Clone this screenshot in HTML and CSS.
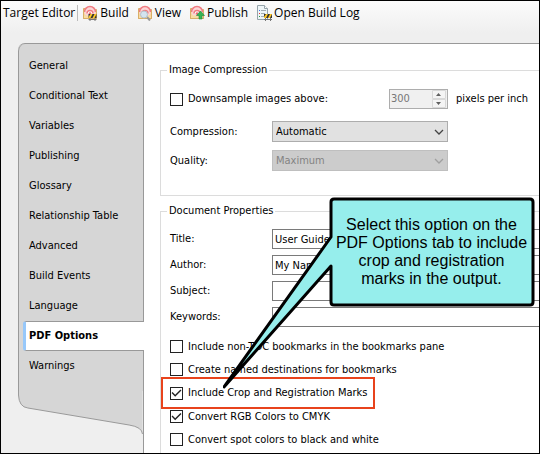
FILE: index.html
```html
<!DOCTYPE html>
<html lang="en">
<head>
<meta charset="utf-8">
<title>Target Editor</title>
<link rel="stylesheet" href="styles.css">
</head>
<body>
<svg class="defs" aria-hidden="true">
  <symbol id="target" viewBox="0 0 16 16">
    <path d="M1.500 3.500h4l1 1h8v9h-13z" fill="#f6d79a" stroke="#d9ae68"/>
    <path d="M2.500 9V6.500a5.500 5.500 0 0 1 11 0V9l-2 2h-7z" fill="#fbd5d6"/>
    <path d="M2.500 7a5.500 5.500 0 0 1 11 0" fill="none" stroke="#f07c82" stroke-width="1.600"/>
    <path d="M5 8.500a3 3 0 0 1 6 0" fill="#fff" stroke="#f07c82" stroke-width="1.400"/>
    <path d="M2 10.500h12v3H2z" fill="#f8dda4"/>
    <path d="M1.500 5v8.500h13V5" fill="none" stroke="#d9ae68"/>
    <circle cx="8" cy="8.500" r="1.200" fill="#ee6a72"/>
  </symbol>
  <symbol id="barrier" viewBox="0 0 8 8">
    <path d="M1.500 4v4M6.500 4v4M0 6.500h8" stroke="#777" fill="none"/>
    <path d="M0 1h8v4H0z" fill="#333"/>
    <path d="M0 4l2-3h2L2 5H0zM4 5l2-4h2L6 5z" fill="#ffc928"/>
  </symbol>
  <symbol id="chevron" viewBox="0 0 10 6"><path d="M1 1l4 4 4-4" fill="none" stroke="currentColor" stroke-width="1.300"/></symbol>
</svg>
<div class="window">
  <header class="toolbar">
    <span class="title">Target Editor</span>
    <button type="button"><svg viewBox="0 0 16 16"><use href="#target" width="16" height="16"/><use href="#barrier" x="6" y="8" width="9" height="8"/></svg>Build</button>
    <button type="button"><svg viewBox="0 0 16 16"><use href="#target" width="16" height="16"/><path d="M10 12l3 3.500" stroke="#999" stroke-width="2"/><circle cx="7" cy="9.500" r="3.500" fill="#d4e4f0" stroke="#b4c0ca"/></svg>View</button>
    <button type="button"><svg viewBox="0 0 16 16"><use href="#target" width="16" height="16"/><path d="M11.500 6l4 4.500h-2.500v3.500h-3v-3.500H7.500z" fill="#35b455" stroke="#1b8a3a" stroke-width=".6"/></svg>Publish</button>
    <button type="button"><svg viewBox="0 0 16 16"><path d="M1.500.500h7l3 3v11h-10z" fill="#eef5f7" stroke="#94a3aa"/><path d="M8.500.500v3h3" fill="#fff" stroke="#94a3aa"/><path d="M5 5.500h5M5 8.500h4M5 11.500h3" stroke="#a2adb2"/><path d="M3 5h1v1H3z" fill="#3a6ff0"/><path d="M3 8h1v1H3z" fill="#e33"/><path d="M3 11h1v1H3z" fill="#2a9c42"/><use href="#barrier" x="8" y="8" width="8" height="8"/></svg>Open Build Log</button>
  </header>
  <div class="editor">
    <nav class="tabs">
      <ul>
        <li><a href="#">General</a></li>
        <li><a href="#">Conditional Text</a></li>
        <li><a href="#">Variables</a></li>
        <li><a href="#">Publishing</a></li>
        <li><a href="#">Glossary</a></li>
        <li><a href="#">Relationship Table</a></li>
        <li><a href="#">Advanced</a></li>
        <li><a href="#">Build Events</a></li>
        <li><a href="#">Language</a></li>
        <li><a href="#" class="current" aria-current="page">PDF Options</a></li>
        <li><a href="#">Warnings</a></li>
      </ul>
      <svg class="tail" viewBox="0 0 126 48" preserveAspectRatio="none"><path d="M.500 0V4Q1 16 10 17L112 34Q125 36 125.500 43V0" fill="#d6d6d6"/><path d="M.500 0V4Q1 16 10 17L112 34Q125 36 125.500 43" fill="none" stroke="#999"/></svg>
    </nav>
    <main class="page">
      <fieldset class="compression">
        <legend>Image Compression</legend>
        <div class="sample">
          <label class="check"><input type="checkbox">Downsample images above:</label>
          <span class="spinner"><input type="text" value="300" aria-label="Pixels per inch" disabled><svg viewBox="0 0 14 18"><path d="M.500.500h13v8H.500zM.500 9.500h13v8H.500z" fill="#f4f4f4" stroke="#d8d8d8"/><path d="M4 6h5L6.500 3zM4 12h5L6.500 15z" fill="#606060"/></svg></span>
          <span>pixels per inch</span>
        </div>
        <div class="row">
          <label for="comp">Compression:</label>
          <span class="select"><select id="comp"><option>Automatic</option></select><svg><use href="#chevron"/></svg></span>
        </div>
        <div class="row">
          <label for="qual">Quality:</label>
          <span class="select off"><select id="qual" disabled><option>Maximum</option></select><svg><use href="#chevron"/></svg></span>
        </div>
      </fieldset>
      <fieldset class="document">
        <legend>Document Properties</legend>
        <div class="fields">
          <div class="row"><label for="t">Title:</label><input id="t" type="text" value="User Guide"></div>
          <div class="row"><label for="a">Author:</label><input id="a" type="text" value="My Name"></div>
          <div class="row"><label for="s">Subject:</label><input id="s" type="text"></div>
          <div class="row"><label for="k">Keywords:</label><input id="k" type="text"></div>
        </div>
        <div class="options">
          <label class="check"><input type="checkbox">Include non-TOC bookmarks in the bookmarks pane</label>
          <label class="check"><input type="checkbox">Create named destinations for bookmarks</label>
          <label class="check marked"><input type="checkbox" checked>Include Crop and Registration Marks</label>
          <label class="check"><input type="checkbox" checked>Convert RGB Colors to CMYK</label>
          <label class="check"><input type="checkbox">Convert spot colors to black and white</label>
        </div>
      </fieldset>
    </main>
  </div>
  <aside class="callout">
    <svg viewBox="0 0 320 200"><path d="M111 4H307Q310 4 310 7V107Q310 110 307 110H111Q108 110 108 107V71L1 192 108 42V7Q108 4 111 4Z" fill="#96eeec" stroke="#000" stroke-width="3" stroke-linejoin="round"/></svg>
    <p>Select this option on the<br>PDF Options tab to include<br>crop and registration<br>marks in the output.</p>
  </aside>
</div>
</body>
</html>
```
FILE: styles.css
```css
* { box-sizing: border-box; }
body {
  margin: 0;
  font: 11px/16px "DejaVu Sans Condensed", "DejaVu Sans", sans-serif;
  color: #000;
}
input, select, button { font: inherit; color: inherit; }
.defs { position: absolute; width: 0; height: 0; }
.window {
  position: relative;
  display: flex;
  flex-direction: column;
  height: 100vh;
  border: 1px solid #000;
  background: linear-gradient(#fbfbfb, #efefef 32px);
  overflow: hidden;
}
.toolbar {
  display: flex;
  align-items: center;
  flex: none;
  height: 24px;
  padding-left: 2px;
  font: 12px/16px "Open Sans", sans-serif;
  white-space: nowrap;
}
.title { padding-right: 2px; border-right: 1px solid #bbb; }
.toolbar button {
  display: flex;
  align-items: center;
  gap: 2px;
  margin-left: 4px;
  padding: 0 4px 0 0;
  border: 0;
  background: none;
}
.toolbar svg { width: 16px; height: 16px; }
.editor {
  display: flex;
  flex: 1;
  min-height: 0;
  margin: 18px 0 0 17px;
  border-top: 1px solid #999;
  border-top-left-radius: 7px;
}
.tabs {
  flex: none;
  width: 126px;
  border-right: 1px solid #999;
}
.tabs ul {
  margin: 0;
  padding: 7px 0 10px;
  list-style: none;
  background: #d6d6d6;
  border-left: 1px solid #999;
  border-top-left-radius: 7px;
}
.tabs a {
  display: block;
  height: 30px;
  padding: 7px 0 7px 10px;
  color: #000;
  text-decoration: none;
}
.tabs .current {
  margin: 0 -1px 0 4px;
  padding: 6px 0 6px 3px;
  background: #fff;
  border: solid #999;
  border-width: 1px 0;
  border-left: 3px solid #97c8fa;
  border-radius: 3px 0 0 3px;
  font-weight: bold;
}
.tail { display: block; width: 125px; height: 48px; }
.page {
  flex: 1;
  min-width: 0;
  padding: 18px 0 0 16px;
  background: #fff;
}
fieldset {
  min-width: 0;
  margin: 0;
  border: 1px solid #dcdcdc;
  border-right: 0;
  padding: 0 0 0 9px;
}
legend { margin-left: -3px; padding: 0 2px; }
.compression { padding-bottom: 24px; }
.sample {
  display: flex;
  align-items: center;
  gap: 8px;
  margin: 11px 0 12px;
}
.check { display: flex; align-items: center; gap: 5px; white-space: nowrap; }
.check input {
  flex: none;
  appearance: none;
  width: 13px;
  height: 13px;
  margin: 0;
  border: 1px solid #222;
  background: #fff;
}
.check input:checked::before {
  content: "";
  display: block;
  height: 11px;
  background: #222;
  clip-path: polygon(5% 50%, 14% 41%, 38% 66%, 86% 18%, 95% 27%, 38% 84%);
}
.sample .check { width: 211px; }
.spinner {
  display: flex;
  align-items: center;
  width: 59px;
  height: 20px;
  border: 1px solid #adadad;
  background: #f0f0f0;
}
.spinner input {
  flex: 1;
  min-width: 0;
  padding: 0 1px;
  border: 0;
  background: none;
  color: #777;
}
.spinner svg { width: 14px; height: 18px; margin-right: 1px; }
.row { display: flex; align-items: center; }
.row label { flex: none; width: 102px; }
.row + .row { margin-top: 8px; }
.select { position: relative; width: 176px; height: 21px; }
.select select {
  appearance: none;
  width: 100%;
  height: 100%;
  padding: 0 3px;
  border: 1px solid #adadad;
  border-radius: 0;
  background: #e1e1e1;
}
.select svg {
  position: absolute;
  right: 4px;
  top: 8px;
  width: 10px;
  height: 6px;
  color: #444;
}
.select.off select { color: #838383; background: #ccc; border-color: #bfbfbf; opacity: 1; }
.select.off svg { color: #a0a0a0; }
.document { margin-top: 7px; padding-bottom: 20px; }
.fields { display: grid; gap: 6px; margin-top: 10px; }
.fields .row { margin: 0; }
.fields input {
  flex: 1;
  min-width: 0;
  height: 20px;
  padding: 0 2px;
  border: 1px solid #7a7a7a;
  border-right: 0;
}
.options { margin-top: 8px; }
.options .check { height: 23px; }
.options .marked {
  width: 214px;
  height: 32px;
  margin: -4px 0 -4px -9px;
  padding-left: 7px;
  border: 2px solid #e8431c;
}
.callout {
  position: absolute;
  left: 222px;
  top: 194px;
  width: 320px;
  height: 200px;
}
.callout svg { display: block; width: 320px; height: 200px; }
.callout p {
  position: absolute;
  left: 107px;
  top: 21px;
  width: 203px;
  margin: 0;
  font: 16px/18px "Liberation Sans", sans-serif;
  text-align: center;
  white-space: nowrap;
}
```
